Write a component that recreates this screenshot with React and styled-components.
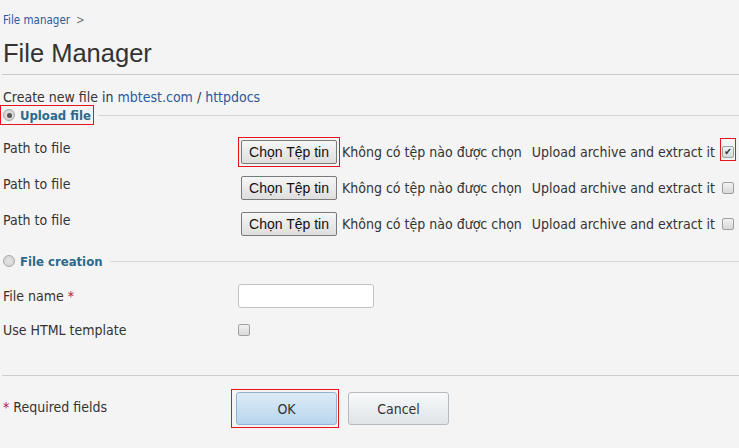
import React from "react"
import styled, { createGlobalStyle } from "styled-components"

const GlobalStyle = createGlobalStyle`
  html, body {
    margin: 0;
    padding: 0;
    background: #f4f4f4;
  }
  body {
    font-family: "DejaVu Sans Condensed", "DejaVu Sans", sans-serif;
    font-size: 14px;
    color: #333;
  }
`

const Page = styled.div`
  width: 739px;
  height: 448px;
  padding-left: 2px;
  box-sizing: border-box;
  overflow: hidden;
`

const Crumbs = styled.div`
  padding: 13px 0 0 1px;
  height: 15px;
  font-size: 11.5px;
  line-height: 15px;
  color: #777;

  a {
    color: #2a5a9c;
    text-decoration: none;
    margin-right: 6px;
  }
`

const Title = styled.h1`
  margin: 0;
  padding: 10px 0 0 1px;
  height: 36px;
  font-family: "Liberation Sans", Arial, sans-serif;
  font-weight: normal;
  font-size: 25.5px;
  line-height: 30px;
  color: #333;
  border-bottom: 1px solid #c9c9c9;
`

const Intro = styled.p`
  margin: 0;
  padding: 14px 0 0 1px;
  line-height: 17px;

  a {
    color: #2a5a9c;
    text-decoration: none;
  }
`

const Legend = styled.div`
  display: flex;
  align-items: center;
  height: 18px;
  margin-top: ${p => p.$top || 0}px;

  &::after {
    content: "";
    flex: 1;
    height: 1px;
    background: #d6d6d6;
    margin-left: 5px;
  }
`

const LegendLabel = styled.span`
  display: flex;
  align-items: center;
  gap: 5px;
  height: 18px;
  padding: 0 2px 0 0;
  margin-left: -1px;
  outline: ${p => (p.$marked ? "1px solid #e8141c" : "none")};
  font-size: 13px;
  font-weight: bold;
  color: #2b6a8c;
`

const Radio = styled.span`
  display: inline-block;
  width: 12px;
  height: 12px;
  margin-left: 2px;
  border-radius: 50%;
  border: 1px solid #a8a8a8;
  box-sizing: border-box;
  background: radial-gradient(circle, #e6e6e6 0%, #cfcfcf 100%);
  position: relative;

  &::after {
    content: "";
    display: ${p => (p.$checked ? "block" : "none")};
    position: absolute;
    left: 2.5px;
    top: 2.5px;
    width: 5px;
    height: 5px;
    border-radius: 50%;
    background: #555;
  }
`

const Rows = styled.div`
  display: flex;
  flex-direction: column;
  padding-top: ${p => p.$top || 0}px;
`

const Row = styled.div`
  display: grid;
  grid-template-columns: 236px 1fr;
  align-items: center;
  height: ${p => p.$h || 36}px;
`

const Label = styled.div`
  padding-left: 1px;
  margin-top: ${p => p.$shift || 0}px;

  em {
    font-style: normal;
    color: #c0102a;
  }
`

const Field = styled.div`
  display: flex;
  align-items: center;
`

const Marker = styled.span`
  display: inline-flex;
  align-items: flex-start;
  padding: ${p => p.$pad || "2px"};
  border: 1px solid ${p => (p.$on ? "#e8141c" : "transparent")};
`

const CheckMarker = styled(Marker)`
  margin-left: 5px;
  margin-bottom: 5px;
`

const FileButton = styled.button`
  width: 96px;
  height: 24px;
  padding: 0;
  font-family: "Liberation Sans", Arial, sans-serif;
  font-size: 14px;
  color: #111;
  border: 1px solid #7a7a7a;
  border-radius: 2px;
  background: linear-gradient(#f6f6f6, #dedede);
`

const NoFile = styled.span`
  margin-left: 2px;
  margin-right: 10px;
`

const Box = styled.span`
  display: inline-block;
  width: 12px;
  height: 12px;
  box-sizing: border-box;
  border: 1px solid #a0a0a0;
  border-radius: 2px;
  background: linear-gradient(#f2f2f2, #d8d8d8);
  font-size: 10px;
  line-height: 10px;
  text-align: center;
  color: #333;
`

const TextInput = styled.input`
  width: 136px;
  height: 24px;
  margin: 0;
  box-sizing: border-box;
  border: 1px solid #c4c4c4;
  border-radius: 3px;
  background: #fff;
`

const Footer = styled.div`
  margin-top: 28px;
  border-top: 1px solid #cdcdcd;
  padding-top: 13px;
`

const Buttons = styled.div`
  display: flex;
  align-items: center;
  gap: 9px;
  margin-left: -7px;
`

const Action = styled.button`
  width: 101px;
  height: 33px;
  box-sizing: border-box;
  font-family: "DejaVu Sans Condensed", "DejaVu Sans", sans-serif;
  font-size: 14px;
  color: #333;
  border-radius: 3px;
  border: 1px solid ${p => (p.$primary ? "#93b4cf" : "#b4bcc2")};
  background: ${p =>
    p.$primary
      ? "linear-gradient(#ddebf7, #b7d5ee)"
      : "linear-gradient(#f7f9fa, #e0e4e7)"};
`

const uploads = [true, false, false]

export default function App() {
  return (
    <Page>
      <GlobalStyle />
      <Crumbs>
        <a href="#">File manager</a>&gt;
      </Crumbs>
      <Title>File Manager</Title>
      <Intro>
        Create new file in <a href="#">mbtest.com</a> / <a href="#">httpdocs</a>
      </Intro>

      <Legend>
        <LegendLabel $marked>
          <Radio $checked />
          Upload file
        </LegendLabel>
      </Legend>
      <Rows $top={10}>
        {uploads.map((on, i) => (
          <Row key={i}>
            <Label $shift={-8}>Path to file</Label>
            <Field>
              <Marker $on={on} $pad="2px">
                <FileButton>Chọn Tệp tin</FileButton>
              </Marker>
              <NoFile>Không có tệp nào được chọn</NoFile>
              Upload archive and extract it
              <CheckMarker $on={on} $pad="7px 1px 2px">
                <Box>{on ? "✔" : ""}</Box>
              </CheckMarker>
            </Field>
          </Row>
        ))}
      </Rows>

      <Legend $top={10}>
        <LegendLabel>
          <Radio />
          File creation
        </LegendLabel>
      </Legend>
      <Rows $top={9}>
        <Row $h={34}>
          <Label>
            File name <em>*</em>
          </Label>
          <Field>
            <TextInput />
          </Field>
        </Row>
        <Row $h={34}>
          <Label>Use HTML template</Label>
          <Field>
            <Box />
          </Field>
        </Row>
      </Rows>

      <Footer>
        <Row $h={37}>
          <Label $shift={-3}>
            <em>*</em> Required fields
          </Label>
          <Buttons>
            <Marker $on $pad="2px 1px 2px 4px">
              <Action $primary>OK</Action>
            </Marker>
            <Action>Cancel</Action>
          </Buttons>
        </Row>
      </Footer>
    </Page>
  )
}
